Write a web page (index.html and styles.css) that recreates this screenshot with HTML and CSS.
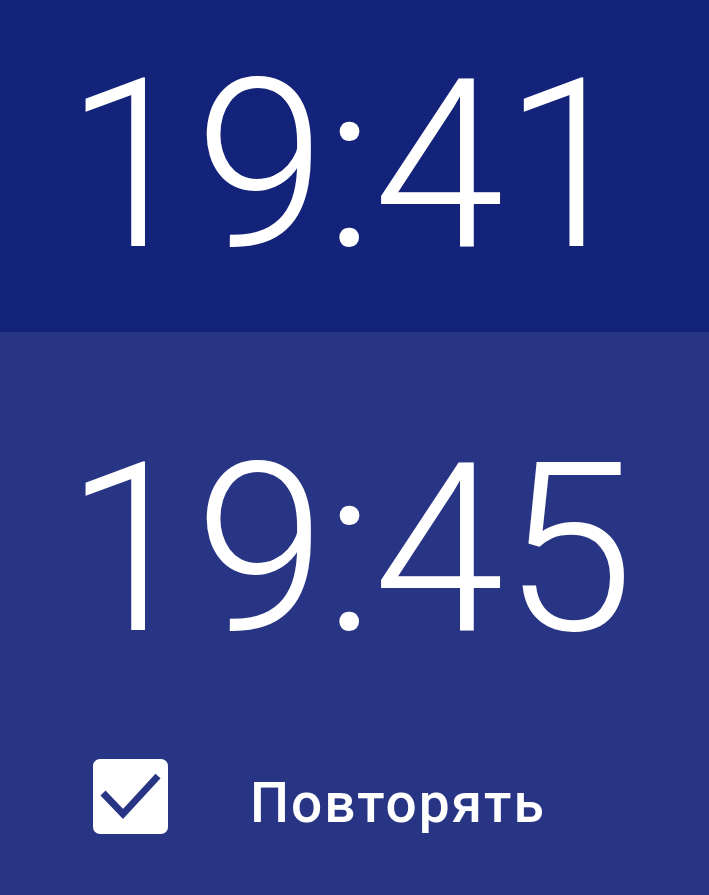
FILE: index.html
```html
<!DOCTYPE html>
<html>
<head>
<meta charset="utf-8">
<link rel="stylesheet" href="styles.css">
</head>
<body>
<div class="screen">
  <div class="band band-top">
    <div class="time">19:41</div>
  </div>
  <div class="band band-bottom">
    <div class="time time-second">19:45</div>
    <div class="repeat">
      <div class="checkbox">
        <svg viewBox="0 0 75 75" width="75" height="75"><path d="M10 34 L30 55 L65 17" fill="none" stroke="#283584" stroke-width="7" stroke-linecap="butt" stroke-linejoin="miter"/></svg>
      </div>
      <span class="label">Повторять</span>
    </div>
  </div>
</div>
</body>
</html>
```
FILE: styles.css
```css
html, body {
  margin: 0;
  padding: 0;
}
body {
  width: 709px;
  height: 895px;
  overflow: hidden;
  font-family: Roboto, "Noto Sans", sans-serif;
  color: #ffffff;
}
.screen {
  display: flex;
  flex-direction: column;
  height: 895px;
}
.band-top {
  background: #13237a;
  height: 332px;
  box-sizing: border-box;
  padding-left: 65px;
}
.band-bottom {
  background: #283584;
  flex: 1;
  box-sizing: border-box;
  padding-left: 65px;
}
.time {
  font-weight: 300;
  font-size: 236px;
  line-height: 1;
  padding-top: 48px;
  letter-spacing: -1px;
}
.time-second {
  padding-top: 100px;
}
.repeat {
  display: flex;
  align-items: center;
  margin-top: 89px;
  margin-left: 28px;
}
.checkbox {
  width: 75px;
  height: 75px;
  background: #ffffff;
  border-radius: 7px;
  display: flex;
}
.label {
  font-weight: 500;
  font-size: 55px;
  letter-spacing: 2px;
  margin-left: 82px;
  padding-top: 14px;
}
```
